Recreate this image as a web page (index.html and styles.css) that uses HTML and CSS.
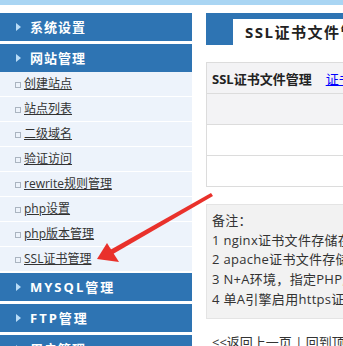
FILE: index.html
```
<html lang="zh-CN">
<head>
    <meta charset="UTF-8">
    <title>SSL证书文件管理</title>
    <link rel="stylesheet" href="styles.css">
</head>
<body>
    <div class="topbar"></div>
    <div class="main">
        <div class="sidebar">
            <div class="menu-head">系统设置</div>
            <div class="menu-head">网站管理</div>
            <ul class="menu-list">
                <li><a href="#">创建站点</a></li>
                <li><a href="#">站点列表</a></li>
                <li><a href="#">二级域名</a></li>
                <li><a href="#">验证访问</a></li>
                <li><a href="#">rewrite规则管理</a></li>
                <li><a href="#">php设置</a></li>
                <li><a href="#">php版本管理</a></li>
                <li><a href="#">SSL证书管理</a></li>
            </ul>
            <div class="menu-head latin">MYSQL管理</div>
            <div class="menu-head latin">FTP管理</div>
            <div class="menu-head">用户管理</div>
        </div>
        <div class="content">
            <div class="tabbar">
                <div class="tab">SSL证书文件管理</div>
            </div>
            <table class="grid">
                <tr class="head">
                    <td><b>SSL证书文件管理</b><a href="#" class="link">证书文件上传</a></td>
                </tr>
                <tr class="gray"><td></td></tr>
                <tr><td></td></tr>
                <tr><td></td></tr>
            </table>
            <div class="notes">
                <p>备注：</p>
                <p>1 nginx证书文件存储在/vhs/nginx/conf/ssl目录下</p>
                <p>2 apache证书文件存储在/vhs/apache/conf/ssl目录下</p>
                <p>3 N+A环境，指定PHP版本</p>
                <p>4 单A引擎启用https证书</p>
            </div>
            <div class="back">&lt;&lt;返回上一页 | 回到顶部</div>
        </div>
    </div>
    <svg class="arrow" width="343" height="346" viewBox="0 0 343 346">
        <polygon points="211,193 213,196 113,254 110,250" fill="#e9312b"/>
        <polygon points="97,259 107,243 119,262" fill="#e9312b"/>
    </svg>
</body>
</html>
```
FILE: styles.css
```
body { margin: 0; font-family: "Open Sans", "Noto Sans CJK SC", sans-serif; font-size: 12px; color: #333; background: #fff; overflow: hidden; }
.topbar { height: 5px; background: #a9d5f3; }
.main { display: flex; padding-top: 8px; }
.sidebar { width: 192px; flex: none; }
.menu-head {
    position: relative;
    height: 28px;
    line-height: 28px;
    margin-bottom: 3px;
    padding-left: 30px;
    background: #2e74b3;
    color: #fff;
    font-weight: bold;
    font-size: 13px;
    letter-spacing: 1px;
}
.menu-head.latin { letter-spacing: 2px; }
.menu-head::before {
    content: "";
    position: absolute;
    left: 16px; top: 10px;
    border-left: 5px solid #b9dcf7;
    border-top: 4px solid transparent;
    border-bottom: 4px solid transparent;
}
.menu-list { list-style: none; margin: -3px 0 1px; padding: 0; }
.menu-list li {
    height: 24px;
    line-height: 24px;
    border-bottom: 1px solid #fff;
    background: #edf3fb;
    padding-left: 24px;
    position: relative;
}
.menu-list li::before {
    content: "";
    position: absolute;
    left: 15px; top: 10px;
    width: 4px; height: 4px;
    border: 1px solid #aab4c0;
}
.menu-list a { color: #333; text-decoration: underline; }
.content { margin-left: 14px; flex: 1; min-width: 0; }
.tabbar { height: 32px; background: #2e74b3; padding-left: 27px; display: flex; align-items: flex-end; }
.tab {
    height: 26px;
    line-height: 26px;
    background: #fff;
    padding-left: 12px;
    width: 300px;
    white-space: nowrap;
    font-weight: bold;
    font-size: 15px;
    letter-spacing: 1.5px;
    color: #222;
}
.grid { margin-top: 17px; width: 320px; border-collapse: collapse; border: 1px solid #dcdcdc; }
.grid tr { height: 31px; }
.grid td { border-bottom: 1px solid #dcdcdc; padding: 0 5px; white-space: nowrap; }
.grid .head td { background: #f3f3f5; font-size: 13px; color: #222; }
.grid .gray td { background: #f3f3f5; }
.link { margin-left: 14px; color: #00f; text-decoration: underline; }
.notes {
    margin-top: 17px;
    width: 330px;
    background: #f2f2f2;
    border: 1px solid #e4e4e4;
    padding: 6px 5px 8px;
    white-space: nowrap;
    font-size: 13px;
    letter-spacing: 0.3px;
}
.notes p { margin: 0; line-height: 19.7px; }
.back { margin-top: 13px; padding-left: 6px; font-size: 13px; white-space: nowrap; }
.arrow { position: absolute; left: 0; top: 0; }
```
